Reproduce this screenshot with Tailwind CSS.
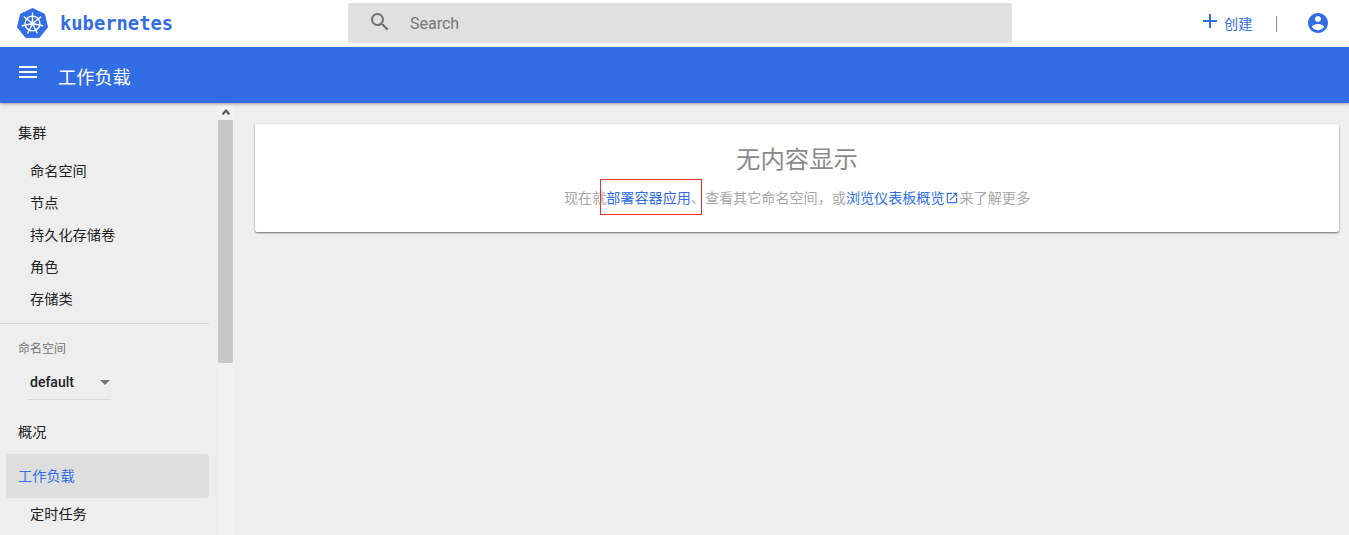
<!DOCTYPE html>
<html lang="zh-CN">
<head>
    <meta charset="UTF-8">
    <title>工作负载 - Kubernetes Dashboard</title>
    <script src="https://cdn.jsdelivr.net/npm/@tailwindcss/browser@4"></script>
</head>
<body class="bg-[#eeeeee] h-[535px] w-[1349px] overflow-hidden flex flex-col font-['Roboto','Noto_Sans_CJK_SC',sans-serif]">

    <!-- top toolbar -->
    <header class="h-[47px] bg-white flex items-center shrink-0">
        <div class="w-[348px] flex items-center pl-[17px] shrink-0">
            <svg class="w-[31px] h-[31px]" viewBox="0 0 31 31">
                <polygon points="15.5,0.5 27.5,6.2 30.5,19.2 22.2,29.6 8.8,29.6 0.5,19.2 3.5,6.2" fill="#326de6" stroke="#326de6" stroke-linejoin="round" stroke-width="1"/>
                <g stroke="#fff" fill="none" stroke-width="1.4" stroke-linecap="round">
                    <circle cx="15.5" cy="15.5" r="7.4"/>
                    <path d="M15.5 15.5V5M15.5 15.5 23.7 9M15.5 15.5 25.7 17.8M15.5 15.5 20.1 25M15.5 15.5 10.9 25M15.5 15.5 5.3 17.8M15.5 15.5 7.3 9"/>
                </g>
                <circle cx="15.5" cy="15.5" r="2" fill="#fff"/>
            </svg>
            <span class="ml-[12px] mt-[2px] text-[18.8px] leading-none font-bold text-[#326de6] font-['DejaVu_Sans_Mono',monospace]">kubernetes</span>
        </div>
        <div class="w-[664px] h-[40px] mb-[1px] bg-[#e0e0e0] rounded-[2px] flex items-center pl-[20px] shrink-0">
            <svg class="w-[24px] h-[24px] mb-[3px]" viewBox="0 0 24 24" fill="#6f6f6f">
                <path d="M15.5 14h-.79l-.28-.27A6.47 6.47 0 0 0 16 9.5 6.5 6.5 0 1 0 9.5 16c1.61 0 3.09-.59 4.23-1.57l.27.28v.79l5 4.99L20.49 19l-4.99-5zm-6 0C7.01 14 5 11.99 5 9.5S7.01 5 9.5 5 14 7.01 14 9.5 11.99 14 9.5 14z"/>
            </svg>
            <span class="ml-[18px] mt-[2px] text-[16px] text-[#757575]">Search</span>
        </div>
        <div class="flex items-center ml-[186px]">
            <svg class="w-[24px] h-[24px] mb-[6px]" viewBox="0 0 24 24" fill="#326de6">
                <path d="M19 13h-6v6h-2v-6H5v-2h6V5h2v6h6v2z"/>
            </svg>
            <span class="text-[14.2px] text-[#326de6] mt-[2px] ml-[2px] w-[29px]">创建</span>
            <div class="w-px h-[16px] bg-[#7d8fe8] ml-[23px] mt-[1px]"></div>
            <svg class="w-[24px] h-[24px] ml-[29px] mb-[2px]" viewBox="0 0 24 24" fill="#326de6">
                <path d="M12 2C6.48 2 2 6.48 2 12s4.48 10 10 10 10-4.48 10-10S17.52 2 12 2zm0 3c1.66 0 3 1.34 3 3s-1.34 3-3 3-3-1.34-3-3 1.34-3 3-3zm0 14.2c-2.5 0-4.71-1.28-6-3.22.03-1.99 4-3.08 6-3.08 1.99 0 5.97 1.09 6 3.08-1.29 1.94-3.5 3.22-6 3.22z"/>
            </svg>
        </div>
    </header>

    <!-- blue title bar -->
    <div class="h-[56px] bg-[#326de6] flex items-center shrink-0 shadow-[0_1px_3px_rgba(0,0,0,0.35)] relative z-10">
        <svg class="w-[24px] h-[24px] ml-[16px] mb-[6px]" viewBox="0 0 24 24" fill="#fff">
            <path d="M3 18h18v-2H3v2zm0-5h18v-2H3v2zm0-7v2h18V6H3z"/>
        </svg>
        <span class="ml-[18px] text-[18.2px] text-white leading-none mt-[6px]">工作负载</span>
    </div>

    <div class="flex flex-1 min-h-0">
        <!-- side nav -->
        <nav class="w-[217px] shrink-0 overflow-hidden text-[14.2px] text-[#212121]">
            <div class="h-[60px] pl-[18px] flex items-center pt-[2px]">集群</div>
            <ul class="pl-[30px]">
                <li class="h-[32px] leading-[32px] mt-[-8px]">命名空间</li>
                <li class="h-[32px] leading-[32px]">节点</li>
                <li class="h-[32px] leading-[32px]">持久化存储卷</li>
                <li class="h-[32px] leading-[32px]">角色</li>
                <li class="h-[32px] leading-[32px]">存储类</li>
            </ul>
            <div class="h-px bg-[#d6d6d6] w-[209px] mt-[8px]"></div>
            <div class="pl-[18px] mt-[17px] text-[12px] leading-[16px] text-[#757575]">命名空间</div>
            <div class="ml-[28px] w-[83px] h-[34px] mt-[9px] border-b border-[#d6d6d6] flex items-start pt-[7px] pl-[2px]">
                <span class="font-medium text-[14px] leading-[18px]">default</span>
                <span class="ml-[26px] mt-[7px] border-x-[5px] border-x-transparent border-t-[5px] border-t-[#757575]"></span>
            </div>
            <div class="h-[32px] pl-[18px] mt-[16px] leading-[32px]">概况</div>
            <div class="h-[44px] ml-[6px] w-[203px] mt-[6px] pl-[12px] leading-[44px] bg-[#dedede] rounded-[3px] text-[#326de6]">工作负载</div>
            <div class="h-[32px] pl-[30px] leading-[32px]">定时任务</div>
        </nav>

        <!-- nav scrollbar -->
        <div class="w-[16px] ml-px shrink-0 bg-[#f1f1f1]">
            <div class="h-[17px] flex items-center justify-center">
                <svg class="w-[8px] h-[6px]" viewBox="0 0 8 6" fill="none" stroke="#505050" stroke-width="2"><path d="M0.7 5.3 4 1.6l3.3 3.7"/></svg>
            </div>
            <div class="w-[15px] h-[243px] bg-[#c8c8c8]"></div>
        </div>

        <!-- content -->
        <main class="flex-1 pl-[21px] pr-[10px] pt-[21px]">
            <div class="relative h-[108px] bg-white rounded-[2px] shadow-[0_1px_2px_rgba(0,0,0,0.55)] flex flex-col items-center">
                <h1 class="text-[24.4px] leading-[32px] mt-[20px] text-[#8a8a8a] font-normal">无内容显示</h1>
                <p class="mt-[12px] text-[14.1px] leading-[20px] text-[#a8a8a8] flex items-center">
                    现在就<a class="text-[#326de6]">部署容器应用</a>、查看其它命名空间，或<a class="text-[#326de6]">浏览仪表板概览</a>
                    <svg class="w-[14px] h-[14px] mr-px" viewBox="0 0 24 24" fill="#326de6"><path d="M19 19H5V5h7V3H5a2 2 0 0 0-2 2v14a2 2 0 0 0 2 2h14c1.1 0 2-.9 2-2v-7h-2v7zM14 3v2h3.59l-9.83 9.83 1.41 1.41L19 6.41V10h2V3h-7z"/></svg>来了解更多
                </p>
                <div class="absolute left-[345px] top-[55px] w-[102px] h-[36px] border border-[#f02c2c]"></div>
            </div>
        </main>
    </div>
</body>
</html>
